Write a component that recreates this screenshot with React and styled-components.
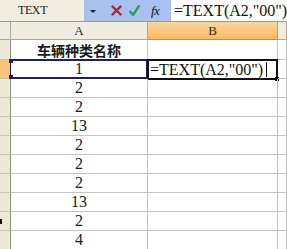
import React from "react";
import styled, { createGlobalStyle, css } from "styled-components";

const Global = createGlobalStyle`
  html, body {
    margin: 0;
    padding: 0;
    background: #ffffff;
    overflow: hidden;
  }
`;

const Window = styled.div`
  width: 287px;
  height: 249px;
  overflow: hidden;
  font-family: "Liberation Serif", "Noto Sans CJK SC", serif;
`;

const FormulaBar = styled.div`
  display: flex;
  height: 21px;
  border-bottom: 1px solid #9c9a8c;
`;

const NameBox = styled.div`
  width: 84px;
  background: #f1eee1;
  font-size: 12px;
  letter-spacing: -0.4px;
  color: #222;
  padding-left: 18px;
  line-height: 20px;
  box-sizing: border-box;
`;

const Tools = styled.div`
  width: 87px;
  background: #a9c1ef;
  display: flex;
  align-items: center;
  gap: 0;
`;

const Arrow = styled.span`
  width: 0;
  height: 0;
  margin: 1px 0 0 6px;
  border-left: 3px solid transparent;
  border-right: 3px solid transparent;
  border-top: 3px solid #1b1b3a;
`;

const ToolIcon = styled.svg`
  margin-left: ${(p) => p.$gap}px;
  flex-shrink: 0;
`;

const Fx = styled.span`
  margin-left: 11px;
  font-style: italic;
  font-size: 13px;
  color: #111;
  letter-spacing: -0.5px;
`;

const FormulaInput = styled.div`
  flex: 1;
  background: #ffffff;
  font-size: 16px;
  line-height: 21px;
  padding-left: 3px;
  color: #111;
  white-space: nowrap;
  overflow: hidden;
`;

const Grid = styled.div`
  display: grid;
  grid-template-columns: 11px 137px 130px 1fr;
  grid-auto-rows: 19px;
  grid-template-rows: 18px 20px;
`;

const Cell = styled.div`
  position: relative;
  box-sizing: border-box;
  border-right: 1px solid ${(p) => (p.$col === 0 ? "#8f8d80" : "#c4c4c4")};
  border-bottom: 1px solid #c4c4c4;
  display: flex;
  align-items: center;
  justify-content: center;
  font-size: 16px;
  color: #1a1a1a;
  white-space: nowrap;
  ${(p) =>
    p.$header &&
    css`
      font-size: 13px;
      color: #2a2a2a;
      background: ${p.$active ? "linear-gradient(#fad79f, #f5b966)" : "#efece0"};
      border-right-color: ${p.$active ? "#c99a55" : "#aca899"};
      border-bottom-color: ${p.$active ? "#c98a3c" : "#aca899"};
    `}
  ${(p) =>
    p.$rowHead &&
    css`
      background: ${p.$active ? "#f8c47a" : "#ece9d8"};
      border-bottom-color: #c6c3b2;
      justify-content: flex-start;
    `}
  ${(p) =>
    p.$bold &&
    css`
      font-family: "Noto Sans CJK SC", sans-serif;
      font-weight: 700;
      font-size: 14px;
    `}
`;

const Selection = styled.div`
  position: absolute;
  left: -1px;
  top: -1px;
  right: -1px;
  bottom: -1px;
  border: 2px solid #20205a;
  border-left-width: 1px;
  pointer-events: none;

  &::before,
  &::after {
    content: "";
    position: absolute;
    left: -2px;
    width: 4px;
    height: 4px;
    background: #20205a;
  }
  &::before { top: -2px; }
  &::after { bottom: -2px; }
`;

const EditBox = styled.div`
  position: absolute;
  left: -1px;
  top: -1px;
  right: -1px;
  bottom: -2px;
  border: 2px solid #111;
  background: #fff;
  display: flex;
  align-items: center;
  padding-left: 1px;
  font-size: 16px;
  color: #111;

  &::after {
    content: "";
    position: absolute;
    right: -3px;
    bottom: -3px;
    width: 4px;
    height: 4px;
    background: #111;
  }
`;

const Caret = styled.span`
  width: 1px;
  height: 15px;
  margin-left: 3px;
  background: #111;
`;

const RowMark = styled.span`
  width: 2px;
  height: 5px;
  background: #111;
  margin-top: 1px;
`;

const rows = [
  { value: "车辆种类名称", bold: true },
  { value: "1", active: true },
  { value: "2" },
  { value: "2" },
  { value: "13" },
  { value: "2" },
  { value: "2" },
  { value: "2" },
  { value: "13" },
  { value: "2", mark: true },
  { value: "4" },
];

const formula = '=TEXT(A2,"00")';

export default function App() {
  return (
    <Window>
      <Global />
      <FormulaBar>
        <NameBox>TEXT</NameBox>
        <Tools>
          <Arrow />
          <ToolIcon $gap={15} width="11" height="11" viewBox="0 0 11 11">
            <path d="M1.5 1.5 L9.5 9.5 M9.5 1.5 L1.5 9.5" stroke="#a3263a" strokeWidth="2.4" strokeLinecap="round" />
          </ToolIcon>
          <ToolIcon $gap={7} width="11" height="12" viewBox="0 0 11 12">
            <path d="M1.2 6.5 L4.2 10 L9.8 1.2" fill="none" stroke="#2e9a52" strokeWidth="2.3" strokeLinecap="round" strokeLinejoin="round" />
          </ToolIcon>
          <Fx>fx</Fx>
        </Tools>
        <FormulaInput>{formula}</FormulaInput>
      </FormulaBar>
      <Grid>
        <Cell $header $col={0} />
        <Cell $header $col={1}>A</Cell>
        <Cell $header $col={2} $active>B</Cell>
        <Cell $header $col={3} />
        {rows.map((r, i) => (
          <React.Fragment key={i}>
            <Cell $rowHead $col={0} $active={r.active}>
              {r.mark && <RowMark />}
            </Cell>
            <Cell $col={1} $bold={r.bold}>
              {r.value}
              {r.active && <Selection />}
            </Cell>
            <Cell $col={2}>
              {r.active && (
                <EditBox>
                  {formula}
                  <Caret />
                </EditBox>
              )}
            </Cell>
            <Cell $col={3} />
          </React.Fragment>
        ))}
      </Grid>
    </Window>
  );
}
